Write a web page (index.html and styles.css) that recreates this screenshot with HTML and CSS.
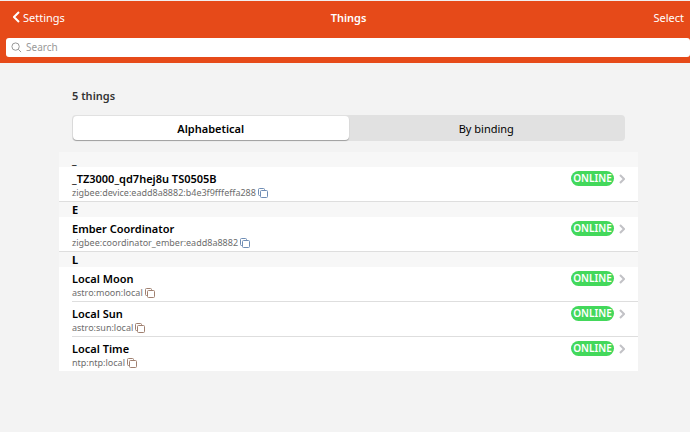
FILE: index.html
```
<!DOCTYPE html>
<html lang="en">
<head>
  <meta charset="UTF-8" />
  <meta name="viewport" content="width=device-width, initial-scale=1.0" />
  <title>Things</title>
  <link rel="stylesheet" href="styles.css">
</head>
<body>
  <!-- shared icons -->
  <svg class="sprite" aria-hidden="true">
    <symbol id="copy" viewBox="0 0 10 10">
      <path d="M2.5 7.5H1.5Q.5 7.5 .5 6.5V1.5Q.5 .5 1.5 .5H5.5Q6.5 .5 6.5 1.5V2.5M3.5 2.5H8.5Q9.5 2.5 9.5 3.5V8.5Q9.5 9.5 8.5 9.5H3.5Q2.5 9.5 2.5 8.5V3.5Q2.5 2.5 3.5 2.5Z" />
    </symbol>
    <symbol id="chevron" viewBox="0 0 6 10">
      <path d="M1 1L5 5L1 9" />
    </symbol>
  </svg>

  <header class="header">
    <nav class="navbar">
      <a class="back" href="#">
        <svg class="back-icon" viewBox="0 0 7 12"><path d="M6 1L1 6L6 11" /></svg>
        Settings
      </a>
      <h1 class="title">Things</h1>
      <a class="select" href="#">Select</a>
    </nav>
    <form class="searchbar">
      <label class="search-label" for="search" aria-label="Search">
        <svg class="search-icon" viewBox="0 0 12 12"><circle cx="5" cy="5" r="4" /><path d="M8 8L11 11" /></svg>
      </label>
      <input type="search" id="search" placeholder="Search" />
    </form>
  </header>

  <main class="content">
    <h2 class="count">5 things</h2>
    <div class="segmented">
      <button type="button" class="segment active">Alphabetical</button>
      <button type="button" class="segment">By binding</button>
    </div>

    <div class="list">
      <h3 class="group-title">_</h3>
      <ul class="group">
        <li class="item">
          <div class="item-text">
            <a class="name" href="#">_TZ3000_qd7hej8u TS0505B</a>
            <div class="uid">zigbee:device:eadd8a8882:b4e3f9fffeffa288
              <button type="button" class="copy blue" aria-label="Copy"><svg><use href="#copy" /></svg></button>
            </div>
          </div>
          <span class="badge">ONLINE</span>
          <svg class="chevron"><use href="#chevron" /></svg>
        </li>
      </ul>

      <h3 class="group-title">E</h3>
      <ul class="group">
        <li class="item">
          <div class="item-text">
            <a class="name" href="#">Ember Coordinator</a>
            <div class="uid">zigbee:coordinator_ember:eadd8a8882
              <button type="button" class="copy blue" aria-label="Copy"><svg><use href="#copy" /></svg></button>
            </div>
          </div>
          <span class="badge">ONLINE</span>
          <svg class="chevron"><use href="#chevron" /></svg>
        </li>
      </ul>

      <h3 class="group-title">L</h3>
      <ul class="group">
        <li class="item">
          <div class="item-text">
            <a class="name" href="#">Local Moon</a>
            <div class="uid">astro:moon:local
              <button type="button" class="copy" aria-label="Copy"><svg><use href="#copy" /></svg></button>
            </div>
          </div>
          <span class="badge">ONLINE</span>
          <svg class="chevron"><use href="#chevron" /></svg>
        </li>
        <li class="item">
          <div class="item-text">
            <a class="name" href="#">Local Sun</a>
            <div class="uid">astro:sun:local
              <button type="button" class="copy" aria-label="Copy"><svg><use href="#copy" /></svg></button>
            </div>
          </div>
          <span class="badge">ONLINE</span>
          <svg class="chevron"><use href="#chevron" /></svg>
        </li>
        <li class="item">
          <div class="item-text">
            <a class="name" href="#">Local Time</a>
            <div class="uid">ntp:ntp:local
              <button type="button" class="copy" aria-label="Copy"><svg><use href="#copy" /></svg></button>
            </div>
          </div>
          <span class="badge">ONLINE</span>
          <svg class="chevron"><use href="#chevron" /></svg>
        </li>
      </ul>
    </div>
  </main>
</body>
</html>
```
FILE: styles.css
```
* {
  margin: 0;
  padding: 0;
  box-sizing: border-box;
}
body {
  background: #f3f3f3;
  color: #000;
  font-family: 'Noto Sans', sans-serif;
  font-size: 11px;
  line-height: 15px;
}
a {
  color: inherit;
  text-decoration: none;
}
button,
input {
  font: inherit;
  border: none;
  background: none;
}
svg {
  fill: none;
  stroke: currentColor;
}
.sprite {
  position: absolute;
  width: 0;
  height: 0;
}

/* header */
.header {
  background: #e64a19;
  border-top: 1px solid #f1efee;
  padding-bottom: 6px;
}
.navbar {
  display: grid;
  grid-template-columns: 1fr auto 1fr;
  align-items: center;
  height: 37px;
  padding: 0 6px 5px 13px;
  color: #fff;
}
.back {
  display: flex;
  align-items: center;
  gap: 3px;
}
.back-icon {
  width: 7px;
  height: 12px;
  stroke-width: 2;
}
.title {
  font-size: 11px;
  font-weight: 600;
}
.select {
  text-align: right;
}
.searchbar {
  display: flex;
  align-items: center;
  gap: 4px;
  height: 19px;
  margin-left: 6px;
  padding-left: 5px;
  background: #fff;
  border-radius: 3px;
}
.search-label {
  display: flex;
  color: #8e8e8e;
}
.search-icon {
  width: 11px;
  height: 11px;
}
.searchbar input {
  flex: 1;
  min-width: 0;
  outline: none;
  font-size: 10px;
}
.searchbar input::placeholder {
  color: #999;
}

/* content */
.content {
  padding: 25px 52px 25px 59px;
}
.count {
  padding-left: 13px;
  font-size: 11px;
  font-weight: 600;
  color: #333;
}
.segmented {
  display: flex;
  height: 26px;
  margin: 12px 13px 11px;
  padding: 1px;
  background: #e1e1e1;
  border-radius: 4px;
}
.segment {
  flex: 1;
  border-radius: 4px;
  cursor: pointer;
}
.segment.active {
  background: #fff;
  font-weight: 600;
  box-shadow: 0 1px 1px rgba(0,0,0,0.3);
}

/* list */
.list {
  background: #fff;
}
.group {
  list-style: none;
}
.group-title {
  height: 15px;
  padding: 0 13px;
  background: #f7f7f7;
  font-size: 11px;
  font-weight: 700;
  line-height: 15px;
}
.item {
  display: flex;
  align-items: flex-start;
  margin-left: 13px;
  padding: 4px 13px 2px 0;
  border-bottom: 1px solid #dedede;
}
.group:not(:last-child) .item {
  margin-left: 0;
  padding-left: 13px;
}
.group:last-child .item:last-child {
  border-bottom: none;
}
.item-text {
  flex: 1;
  min-width: 0;
}
.name {
  display: block;
  font-weight: 600;
}
.uid {
  display: flex;
  align-items: center;
  gap: 2px;
  height: 13px;
  font-size: 9px;
  color: #6d6d6d;
}
.copy {
  display: flex;
  padding-top: 1px;
  color: #a08070;
  cursor: pointer;
}
.copy.blue {
  color: #6f8db5;
}
.copy svg {
  width: 10px;
  height: 10px;
}
.badge {
  width: 43px;
  background: #43d85b;
  border-radius: 8px;
  color: #fff;
  font-size: 10px;
  font-weight: 600;
  text-align: center;
}
.chevron {
  width: 6px;
  height: 10px;
  margin: 3px 0 0 5px;
  color: #c2c2c6;
  stroke-width: 2;
}
```
